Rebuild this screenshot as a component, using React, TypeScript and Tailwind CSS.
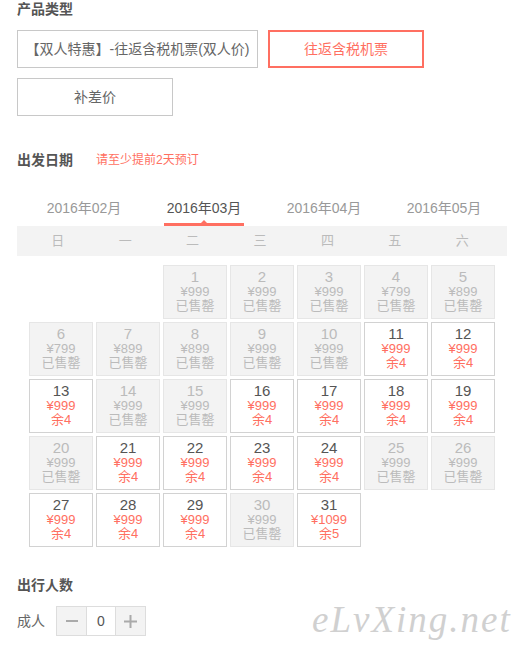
import React from 'react';

type Day = { d: number; price: number; left?: number };

const CORAL = 'text-[#ff6f61]';

const days: (Day | null)[] = [
    null, null,
    { d: 1, price: 999 }, { d: 2, price: 999 }, { d: 3, price: 999 }, { d: 4, price: 799 }, { d: 5, price: 899 },
    { d: 6, price: 799 }, { d: 7, price: 899 }, { d: 8, price: 899 }, { d: 9, price: 999 }, { d: 10, price: 999 },
    { d: 11, price: 999, left: 4 }, { d: 12, price: 999, left: 4 },
    { d: 13, price: 999, left: 4 }, { d: 14, price: 999 }, { d: 15, price: 999 },
    { d: 16, price: 999, left: 4 }, { d: 17, price: 999, left: 4 }, { d: 18, price: 999, left: 4 }, { d: 19, price: 999, left: 4 },
    { d: 20, price: 999 }, { d: 21, price: 999, left: 4 }, { d: 22, price: 999, left: 4 }, { d: 23, price: 999, left: 4 },
    { d: 24, price: 999, left: 4 }, { d: 25, price: 999 }, { d: 26, price: 999 },
    { d: 27, price: 999, left: 4 }, { d: 28, price: 999, left: 4 }, { d: 29, price: 999, left: 4 }, { d: 30, price: 999 },
    { d: 31, price: 1099, left: 5 },
];

const weeks = ['日', '一', '二', '三', '四', '五', '六'];
const months = ['2016年02月', '2016年03月', '2016年04月', '2016年05月'];

const DayCell = ({ day }: { day: Day | null }) => {
    if (!day) return <div className="h-[54px]" />;
    const sold = day.left === undefined;
    return (
        <div
            className={
                sold
                    ? 'h-[54px] border border-[#e6e6e6] bg-[#f3f3f3] pt-[3px] text-center text-[#bbbbbb]'
                    : 'h-[54px] border border-[#d2d2d2] bg-white pt-[3px] text-center'
            }
        >
            <div className={'text-[15px] leading-[16px] ' + (sold ? '' : 'text-[#555555]')}>{day.d}</div>
            <div className={'text-[13px] leading-[14px] ' + (sold ? '' : CORAL)}>¥{day.price}</div>
            <div className={'text-[13px] leading-[14px] ' + (sold ? '' : CORAL)}>
                {sold ? '已售罄' : '余' + day.left}
            </div>
        </div>
    );
};

export default function App() {
    return (
        <div
            className="relative h-[653px] w-[517px] overflow-hidden bg-white pl-[17px] text-[#666666]"
            style={{ fontFamily: '"Liberation Sans", "Noto Sans CJK SC", sans-serif' }}
        >
            <h3 className="text-[14px] font-bold leading-[18px] text-[#555555]">产品类型</h3>
            <div className="mt-[12px] flex w-[420px] flex-wrap gap-[10px]">
                <div className="flex h-[38px] w-[241px] items-center justify-center border border-[#c8c8c8] text-[14px] text-[#666666]">
                    【双人特惠】-往返含税机票(双人价)
                </div>
                <div className="flex h-[38px] w-[156px] items-center justify-center border-2 border-[#ff6f61] text-[14px] text-[#ff6f61]">
                    往返含税机票
                </div>
                <div className="flex h-[38px] w-[156px] items-center justify-center border border-[#c8c8c8] text-[14px] text-[#666666]">
                    补差价
                </div>
            </div>

            <div className="mt-[35px] flex items-center">
                <h3 className="text-[14px] font-bold leading-[18px] text-[#555555]">出发日期</h3>
                <span className="ml-[23px] text-[12px] leading-[18px] text-[#ff6f61]">请至少提前2天预订</span>
            </div>

            <div className="mt-[29px] flex gap-[40px] pl-[27px]">
                {months.map((m, i) => (
                    <div
                        key={m}
                        className={
                            i === 1
                                ? 'relative w-[80px] border-b-[3px] border-[#ff6f61] pb-[5px] text-center text-[14px] leading-[20px] text-[#555555]'
                                : 'w-[80px] border-b-[3px] border-transparent pb-[5px] text-center text-[14px] leading-[20px] text-[#999999]'
                        }
                    >
                        {m}
                        {i === 1 && (
                            <span className="absolute bottom-0 left-[37px] h-0 w-0 border-x-[3px] border-b-[3px] border-x-transparent border-b-[#ff6f61]" />
                        )}
                    </div>
                ))}
            </div>

            <div className="grid h-[30px] w-[490px] grid-cols-7 items-center bg-[#f3f3f3] pl-[7px] pr-[11px] text-center text-[13px] text-[#bbbbbb]">
                {weeks.map((w) => (
                    <span key={w}>{w}</span>
                ))}
            </div>

            <div className="ml-[12px] mt-[9px] grid w-[466px] grid-cols-[repeat(7,64px)] gap-[3px]">
                {days.map((day, i) => (
                    <DayCell key={i} day={day} />
                ))}
            </div>

            <h3 className="mt-[29px] text-[14px] font-bold leading-[18px] text-[#555555]">出行人数</h3>
            <div className="mt-[12px] flex items-center">
                <span className="w-[39px] text-[14px] text-[#666666]">成人</span>
                <div className="flex h-[30px] border border-[#dddddd]">
                    <button className="flex w-[29px] items-center justify-center bg-[#f3f3f3] text-[#aaaaaa]">
                        <svg width="12" height="12" viewBox="0 0 12 12">
                            <path d="M0 6h12" stroke="#aaaaaa" strokeWidth="2" />
                        </svg>
                    </button>
                    <span className="flex w-[30px] items-center justify-center border-x border-[#dddddd] bg-white text-[14px] text-[#555555]">
                        0
                    </span>
                    <button className="flex w-[29px] items-center justify-center bg-[#f3f3f3] text-[#aaaaaa]">
                        <svg width="13" height="13" viewBox="0 0 13 13">
                            <path d="M0 6.5h13M6.5 0v13" stroke="#aaaaaa" strokeWidth="2" />
                        </svg>
                    </button>
                </div>
            </div>

            <div
                className="absolute left-[312px] top-[598px] text-[37px] italic leading-[44px] tracking-[2px] text-[#d0d0d0]"
                style={{ fontFamily: '"Liberation Serif", serif' }}
            >
                eLvXing.net
            </div>
        </div>
    );
}
